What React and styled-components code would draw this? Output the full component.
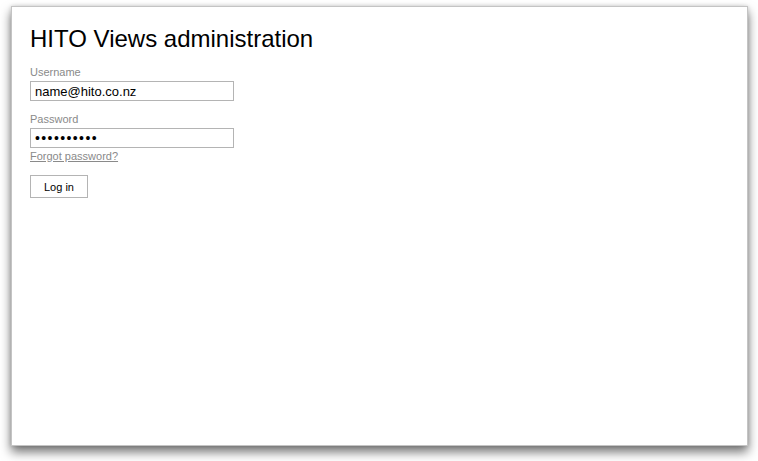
import React from "react";
import styled, { createGlobalStyle } from "styled-components";

const Global = createGlobalStyle`
  html, body { margin: 0; padding: 0; background: #ffffff; }
  body { font-family: "Liberation Sans", Arial, Helvetica, sans-serif; }
`;

const Desktop = styled.div`
  width: 758px;
  height: 461px;
  box-sizing: border-box;
  padding: 6px 10px 15px 11px;
  background: #ffffff;
  overflow: hidden;
`;

const Window = styled.div`
  width: 737px;
  height: 440px;
  box-sizing: border-box;
  background: #ffffff;
  border: 1px solid #c4c4c4;
  box-shadow: 0 6px 10px rgba(0, 0, 0, 0.55), 0 0 4px rgba(0, 0, 0, 0.15);
  padding: 18px 18px;
  display: flex;
  flex-direction: column;
  align-items: flex-start;
`;

const Title = styled.h1`
  margin: 0 0 13px 0;
  font-size: 24px;
  font-weight: normal;
  line-height: 28px;
  color: #000;
`;

const Label = styled.label`
  display: block;
  font-size: 11px;
  line-height: 13px;
  color: #8a8a8a;
  margin-bottom: 2px;
`;

const Field = styled.div`
  display: flex;
  flex-direction: column;
  margin-bottom: ${(p) => p.$gap || 0}px;
`;

const Input = styled.input`
  width: 204px;
  height: 20px;
  box-sizing: border-box;
  border: 1px solid #b4b4b4;
  padding: 0 4px;
  margin: 0;
  font-family: "Liberation Sans", Arial, sans-serif;
  font-size: 13px;
  color: #000;
  background: #fff;
  outline: none;
  border-radius: 0;
  &[type="password"] { font-size: 14px; letter-spacing: 1.4px; }
`;

const Link = styled.a`
  font-size: 11px;
  line-height: 14px;
  color: #8a8a8a;
  text-decoration: underline;
  margin-top: 1px;
`;

const Button = styled.button`
  margin-top: 12px;
  width: 58px;
  height: 23px;
  box-sizing: border-box;
  border: 1px solid #b4b4b4;
  background: #fff;
  font-family: "Liberation Sans", Arial, sans-serif;
  font-size: 11px;
  color: #000;
  padding: 0;
  border-radius: 0;
`;

export default function App() {
  return (
    <>
      <Global />
      <Desktop>
        <Window>
          <Title>HITO Views administration</Title>
          <Field $gap={12}>
            <Label>Username</Label>
            <Input type="text" defaultValue="name@hito.co.nz" />
          </Field>
          <Field>
            <Label>Password</Label>
            <Input type="password" defaultValue="••••••••••" />
          </Field>
          <Link href="#">Forgot password?</Link>
          <Button>Log in</Button>
        </Window>
      </Desktop>
    </>
  );
}
